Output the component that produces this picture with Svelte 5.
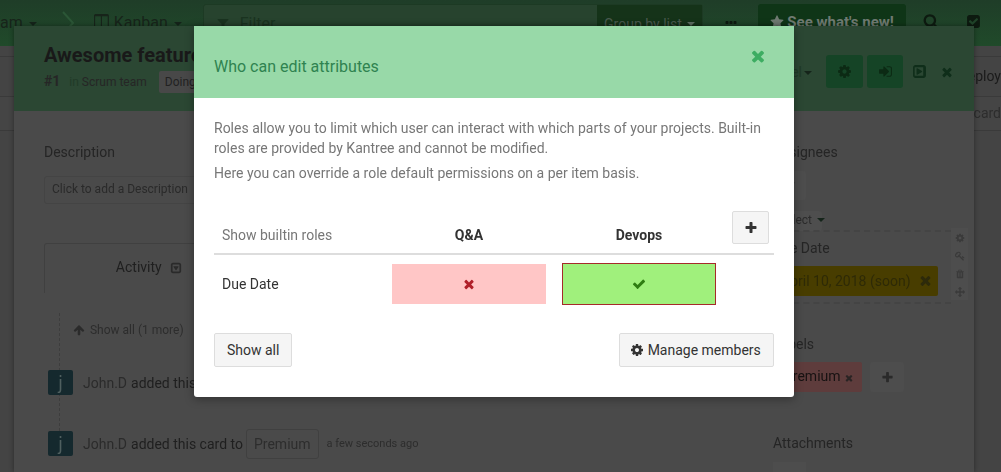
<script>
  const fa = {
    times: 'M1490 1322q0 40-28 68l-136 136q-28 28-68 28t-68-28l-294-294-294 294q-28 28-68 28t-68-28l-136-136q-28-28-28-68t28-68l294-294-294-294q-28-28-28-68t28-68l136-136q28-28 68-28t68 28l294 294 294-294q28-28 68-28t68 28l136 136q28 28 28 68t-28 68l-294 294 294 294q28 28 28 68z',
    check: 'M1671 566q0 40-28 68l-724 724-136 136q-28 28-68 28t-68-28l-136-136-362-362q-28-28-28-68t28-68l136-136q28-28 68-28t68 28l294 295 656-657q28-28 68-28t68 28l136 136q28 28 28 68z',
    plus: 'M1600 736v192q0 40-28 68t-68 28h-416v416q0 40-28 68t-68 28h-192q-40 0-68-28t-28-68v-416h-416q-40 0-68-28t-28-68v-192q0-40 28-68t68-28h416v-416q0-40 28-68t68-28h192q40 0 68 28t28 68v416h416q40 0 68 28t28 68z',
    cog: 'M1152 896q0-106-75-181t-181-75-181 75-75 181 75 181 181 75 181-75 75-181zm512-109v222q0 12-8 23t-20 13l-185 28q-19 54-39 91 35 50 107 138 10 12 10 25t-9 23q-27 37-99 108t-94 71q-12 0-26-9l-138-108q-44 23-91 38-16 136-29 186-7 28-36 28h-222q-14 0-24.5-8.5t-11.5-21.5l-28-184q-49-16-90-37l-141 107q-10 9-25 9-14 0-25-11-126-114-165-168-7-10-7-23 0-12 8-23 15-21 51-66.5t54-70.5q-27-50-41-99l-183-27q-13-2-21-12.5t-8-23.5v-222q0-12 8-23t19-13l186-28q14-46 39-92-40-57-107-138-10-12-10-24 0-10 9-23 26-36 98.5-107.5t94.5-71.5q13 0 26 10l138 107q44-23 91-38 16-136 29-186 7-28 36-28h222q14 0 24.5 8.5t11.5 21.5l28 184q49 16 90 37l142-107q9-9 24-9 13 0 25 10 129 119 165 170 7 8 7 22 0 12-8 23-15 21-51 66.5t-54 70.5q26 50 41 98l183 28q13 2 21 12.5t8 23.5z',
    star: 'M1728 647q0 22-26 48l-363 354 86 500q1 7 1 20 0 21-10.5 35.5t-30.5 14.5q-19 0-40-12l-449-236-449 236q-22 12-40 12-21 0-31.5-14.5t-10.5-35.5q0-6 2-20l86-500-364-354q-25-27-25-48 0-37 56-46l502-73 225-455q19-41 49-41t49 41l225 455 502 73q56 9 56 46z',
    up: 'M1675 971q0 51-37 90l-75 75q-38 38-91 38-54 0-90-38l-294-293v704q0 52-37.5 84.5t-90.5 32.5h-128q-53 0-90.5-32.5t-37.5-84.5v-704l-294 293q-36 38-90 38t-90-38l-75-75q-38-38-38-90 0-53 38-91l651-651q35-37 90-37 54 0 91 37l651 651q37 39 37 91z',
    signin: 'M1312 896q0 26-19 45l-544 544q-19 19-45 19t-45-19-19-45v-288h-448q-26 0-45-19t-19-45v-384q0-26 19-45t45-19h448v-288q0-26 19-45t45-19 45 19l544 544q19 19 19 45zm352-352v704q0 119-84.5 203.5t-203.5 84.5h-320q-13 0-22.5-9.5t-9.5-22.5q0-4-1-20t-.5-26.5 3-23.5 10-19.5 20.5-6.5h320q66 0 113-47t47-113v-704q0-66-47-113t-113-47h-312q-13 0-22.5-9.5t-9.5-22.5q0-4-1-20t-.5-26.5 3-23.5 10-19.5 20.5-6.5h320q119 0 203.5 84.5t84.5 203.5z',
    filter: 'M1595 295q17 41-14 70l-493 493v742q0 42-39 59-13 5-25 5-27 0-45-19l-256-256q-19-19-19-45v-486l-493-493q-31-29-14-70 17-39 59-39h1280q42 0 59 39z',
    search: 'M1216 832q0-185-131.5-316.5t-316.5-131.5-316.5 131.5-131.5 316.5 131.5 316.5 316.5 131.5 316.5-131.5 131.5-316.5zm512 832q0 52-38 90t-90 38q-54 0-90-38l-343-342q-179 124-399 124-143 0-273.5-55.5t-225-150-150-225-55.5-273.5 55.5-273.5 150-225 225-150 273.5-55.5 273.5 55.5 225 150 150 225 55.5 273.5q0 220-124 399l343 343q37 37 37 90z',
    checkSquare: 'M813 1299l614-614q19-19 19-45t-19-45l-102-102q-19-19-45-19t-45 19l-467 467-211-211q-19-19-45-19t-45 19l-102 102q-19 19-19 45t19 45l358 358q19 19 45 19t45-19zm851-883v960q0 119-84.5 203.5t-203.5 84.5h-960q-119 0-203.5-84.5t-84.5-203.5v-960q0-119 84.5-203.5t203.5-84.5h960q119 0 203.5 84.5t84.5 203.5z',
    playSquare: 'M1216 896q0 37-32 55l-544 320q-15 9-32 9-16 0-32-8-32-19-32-56v-640q0-37 32-56 33-18 64 1l544 320q32 18 32 55zm128 480v-960q0-13-9.5-22.5t-22.5-9.5h-960q-13 0-22.5 9.5t-9.5 22.5v960q0 13 9.5 22.5t22.5 9.5h960q13 0 22.5-9.5t9.5-22.5zm320-960v960q0 119-84.5 203.5t-203.5 84.5h-960q-119 0-203.5-84.5t-84.5-203.5v-960q0-119 84.5-203.5t203.5-84.5h960q119 0 203.5 84.5t84.5 203.5z',
    key: 'M832 512q0-80-56-136t-136-56-136 56-56 136q0 42 19 83-41-19-83-19-80 0-136 56t-56 136 56 136 136 56 136-56 56-136q0-42-19-83 41 19 83 19 80 0 136-56t56-136zm851 704q0 17-49 66t-66 49q-9 0-28.5-16t-36.5-33-38.5-40-24.5-26l-96 96 220 220q28 28 28 68 0 42-39 81t-81 39q-40 0-68-28l-671-671q-176 131-365 131-163 0-265.5-102.5t-102.5-265.5q0-160 95-313t248-248 313-95q163 0 265.5 102.5t102.5 265.5q0 189-131 365l355 355 96-96q-3-3-26-24.5t-40-38.5-33-36.5-16-28.5q0-17 49-66t66-49q13 0 23 10 6 6 46 44.5t82 79.5 86.5 86 73 78 28.5 41z',
    trash: 'M704 1376v-704q0-14-9-23t-23-9h-64q-14 0-23 9t-9 23v704q0 14 9 23t23 9h64q14 0 23-9t9-23zm256 0v-704q0-14-9-23t-23-9h-64q-14 0-23 9t-9 23v704q0 14 9 23t23 9h64q14 0 23-9t9-23zm256 0v-704q0-14-9-23t-23-9h-64q-14 0-23 9t-9 23v704q0 14 9 23t23 9h64q14 0 23-9t9-23zm-544-992h448l-48-117q-7-9-17-11h-317q-10 2-17 11zm928 32v64q0 14-9 23t-23 9h-96v948q0 83-47 143.5t-113 60.5h-832q-66 0-113-58.5t-47-141.5v-952h-96q-14 0-23-9t-9-23v-64q0-14 9-23t23-9h309l70-167q15-37 54-63t79-26h320q40 0 79 26t54 63l70 167h309q14 0 23 9t9 23z',
    move: 'M1792 896q0 26-19 45l-256 256q-19 19-45 19t-45-19-19-45v-128h-384v384h128q26 0 45 19t19 45-19 45l-256 256q-19 19-45 19t-45-19l-256-256q-19-19-19-45t19-45 45-19h128v-384h-384v128q0 26-19 45t-45 19-45-19l-256-256q-19-19-19-45t19-45l256-256q19-19 45-19t45 19 19 45v128h384v-384h-128q-26 0-45-19t-19-45 19-45l256-256q19-19 45-19t45 19l256 256q19 19 19 45t-19 45-45 19h-128v384h384v-128q0-26 19-45t45-19 45 19l256 256q19 19 19 45z',
    caretSquare: 'M1273 675q18 35-5 66l-320 448q-19 27-52 27t-52-27l-320-448q-23-31-5-66 17-35 57-35h640q40 0 57 35zm135 701v-960q0-13-9.5-22.5t-22.5-9.5h-960q-13 0-22.5 9.5t-9.5 22.5v960q0 13 9.5 22.5t22.5 9.5h960q13 0 22.5-9.5t9.5-22.5zm256-960v960q0 119-84.5 203.5t-203.5 84.5h-960q-119 0-203.5-84.5t-84.5-203.5v-960q0-119 84.5-203.5t203.5-84.5h960q119 0 203.5 84.5t84.5 203.5z',
    columns: 'M160 1408h608v-1152h-640v1120q0 13 9.5 22.5t22.5 9.5zm736 0h608q13 0 22.5-9.5t9.5-22.5v-1120h-640v1152zm768-1248v1216q0 66-47 113t-113 47h-1344q-66 0-113-47t-47-113v-1216q0-66 47-113t113-47h1344q66 0 113 47t47 113z',
    ellipsis: 'M576 736v192q0 40-28 68t-68 28h-192q-40 0-68-28t-28-68v-192q0-40 28-68t68-28h192q40 0 68 28t28 68zm512 0v192q0 40-28 68t-68 28h-192q-40 0-68-28t-28-68v-192q0-40 28-68t68-28h192q40 0 68 28t28 68zm512 0v192q0 40-28 68t-68 28h-192q-40 0-68-28t-28-68v-192q0-40 28-68t68-28h192q40 0 68 28t28 68z'
  };
</script>

{#snippet icon(name, size, color)}
  <svg class="icon" width={size} height={size} viewBox="0 0 1792 1792" fill={color} aria-hidden="true"><path d={fa[name]} /></svg>
{/snippet}

<div class="page">
  <div class="behind">
    <header class="topbar">
      <span class="crumb team">am <i class="caret"></i></span>
      <svg class="sep" width="14" height="26" viewBox="0 0 14 26" aria-hidden="true"><path d="M2 2l10 11L2 24" fill="none" stroke="#2b5636" stroke-width="2" /></svg>
      <span class="crumb kanban">{@render icon('columns', 16, '#17241a')} Kanban <i class="caret"></i></span>
      <div class="filter">
        <span class="filter-input">{@render icon('filter', 14, '#1a3320')} <span>Filter</span></span>
        <span class="group-by">Group by list <i class="caret light"></i></span>
      </div>
      <span class="dots">{@render icon('ellipsis', 14, '#0f1a12')}</span>
      <span class="news">{@render icon('star', 14, '#6f7a72')} See what's new!</span>
      <span class="search">{@render icon('search', 16, '#0d1a10')}</span>
      <span class="todo">{@render icon('checkSquare', 15, '#0d1a10')}</span>
    </header>
    <div class="board">
      <div class="board-row deploy">Deploy</div>
      <div class="board-row add">Add a card</div>
    </div>

    <section class="card">
      <div class="card-head">
        <div class="card-title">
          <h1>Awesome feature</h1>
          <div class="card-meta"><b>#1</b> <span class="in">in</span> Scrum team <span class="status">Doing</span></div>
        </div>
        <div class="card-actions">
          <span class="model">Model<i class="caret"></i></span>
          <span class="act-btn cog">{@render icon('cog', 15, '#0c2a14')}</span>
          <span class="act-btn signin">{@render icon('signin', 15, '#0c2a14')}</span>
          <span class="act-ico play">{@render icon('playSquare', 15, '#0f2e1a')}</span>
          <span class="act-ico close-card">{@render icon('times', 14, '#0f2e1a')}</span>
        </div>
      </div>
      <div class="card-body">
        <div class="col-main">
          <h2>Description</h2>
          <div class="desc">Click to add a Description</div>
          <div class="tab">Activity <span class="tab-ico">{@render icon('caretSquare', 12, '#2a2a2a')}</span></div>
          <div class="feed">
            <div class="show-more">{@render icon('up', 12, '#2b2b2b')} <span>Show all (1 more)</span></div>
            <div class="event"><span class="avatar">j</span><span class="who">John.D</span> <span class="what">added this card to</span></div>
            <div class="event second"><span class="avatar">j</span><span class="who">John.D</span> <span class="what">added this card to</span> <span class="pill">Premium</span> <span class="when">a few seconds ago</span></div>
          </div>
        </div>
        <div class="col-side">
          <h2>Assignees</h2>
          <div class="assign-btn">+</div>
          <div class="select">Select <i class="caret"></i></div>
          <div class="due">
            <h2>Due Date</h2>
            <div class="due-row"><span class="due-tag">April 10, 2018 (soon) <span class="due-x">{@render icon('times', 15, '#2d2a0a')}</span></span></div>
            <div class="tools">
              {@render icon('cog', 10, '#3a3a3a')}
              {@render icon('key', 10, '#3a3a3a')}
              {@render icon('trash', 10, '#3a3a3a')}
              {@render icon('move', 10, '#3a3a3a')}
            </div>
          </div>
          <h2 class="labels-title">Labels</h2>
          <div class="labels">
            <span class="label">Premium<span class="label-x">{@render icon('times', 10, '#2a2424')}</span></span>
            <span class="label-add">{@render icon('plus', 13, '#2a2a2a')}</span>
          </div>
          <h2 class="attach-title">Attachments</h2>
          <div class="attach-btn"></div>
        </div>
      </div>
    </section>
  </div>

  <div class="dialog" role="dialog" aria-label="Who can edit attributes">
    <div class="dialog-head">
      <h3>Who can edit attributes</h3>
      <span class="close">{@render icon('times', 18, '#3dad62')}</span>
    </div>
    <div class="dialog-body">
      <p>Roles allow you to limit which user can interact with which parts of your projects. Built-in roles are provided by Kantree and cannot be modified.</p>
      <p class="second-p">Here you can override a role default permissions on a per item basis.</p>
      <table>
        <thead>
          <tr>
            <th class="roles-toggle">Show builtin roles</th>
            <th>Q&amp;A</th>
            <th>Devops</th>
            <th class="add-col"><button class="btn add">{@render icon('plus', 14, '#333')}</button></th>
          </tr>
        </thead>
        <tbody>
          <tr>
            <td class="attr">Due Date</td>
            <td><div class="perm deny">{@render icon('times', 14, '#b0202a')}</div></td>
            <td><div class="perm allow">{@render icon('check', 14, '#2f7d12')}</div></td>
            <td></td>
          </tr>
        </tbody>
      </table>
      <div class="dialog-foot">
        <button class="btn">Show all</button>
        <button class="btn manage">{@render icon('cog', 14, '#333')} Manage members</button>
      </div>
    </div>
  </div>
</div>

<style>
  :global(body) {
    margin: 0;
    font-family: Roboto, "Liberation Sans", sans-serif;
    overflow: hidden;
  }

  .page {
    position: relative;
    width: 1001px;
    height: 472px;
    overflow: hidden;
    background: #444;
    font-size: 14px;
    color: #333;
  }

  .icon {
    display: inline-block;
    vertical-align: -2px;
  }

  .caret {
    display: inline-block;
    width: 0;
    height: 0;
    margin-left: 2px;
    vertical-align: 2px;
    border-top: 4px solid #15241a;
    border-left: 4px solid transparent;
    border-right: 4px solid transparent;
  }

  .caret.light {
    border-top-color: #5f6f64;
  }

  .behind {
    position: absolute;
    inset: 0;
    filter: blur(0.45px);
  }

  .topbar {
    display: flex;
    align-items: center;
    height: 46px;
    padding-bottom: 1px;
    box-sizing: border-box;
    background: linear-gradient(#1f3d28, #204a2a);
    color: #17241a;
    font-size: 16px;
    white-space: nowrap;
  }

  .sep {
    margin-left: 24px;
  }

  .kanban {
    margin-left: 19px;
  }

  .filter {
    display: flex;
    height: 40px;
    margin-left: 21px;
    margin-top: 3px;
    border-radius: 3px;
    background: #27432e;
    border: 1px solid #1d3a24;
    box-sizing: border-box;
    width: 500px;
  }

  .filter-input {
    flex: 1;
    padding: 9px 12px;
    color: #1a3320;
  }

  .filter-input span {
    margin-left: 6px;
  }

  .group-by {
    display: flex;
    align-items: center;
    gap: 3px;
    height: 38px;
    padding: 0 7px 2px;
    background: #153319;
    color: #4a5a4f;
    font-size: 14px;
  }

  .dots {
    margin-left: 21px;
  }

  .news {
    margin-left: 20px;
    width: 148px;
    height: 38px;
    margin-top: 1px;
    padding-top: 9px;
    box-sizing: border-box;
    border-radius: 3px;
    background: #0f3517;
    color: #6f7a72;
    font-size: 15px;
    font-weight: 700;
    text-align: center;
  }

  .search {
    margin: 0 0 2px 17px;
  }

  .todo {
    margin: 0 0 2px 27px;
  }

  .board {
    padding-top: 10px;
  }

  .board-row {
    box-sizing: border-box;
    border-top: 1px solid #3a3a3a;
    text-align: right;
    white-space: nowrap;
  }

  .deploy {
    height: 40px;
    padding-top: 11px;
    color: #1b1b1b;
  }

  .add {
    height: 35px;
    padding-top: 8px;
    border-bottom: 1px solid #3a3a3a;
    color: #2d2d2d;
    background: #454545;
  }

  .card {
    position: absolute;
    left: 14px;
    top: 26px;
    width: 960px;
    height: 446px;
    overflow: hidden;
    background: #4a4a4a;
    box-shadow: 0 0 5px rgba(0, 0, 0, 0.4);
  }

  .card-head {
    display: flex;
    justify-content: space-between;
    box-sizing: border-box;
    height: 85px;
    padding: 16px 15px 0 30px;
    background: #2b4733;
  }

  h1 {
    margin: 0;
    font-size: 20px;
    line-height: 26px;
    font-weight: 700;
    color: #191919;
  }

  .card-meta {
    margin-top: 5px;
    font-size: 12px;
    color: #262626;
    white-space: nowrap;
  }

  .card-meta b {
    font-size: 14px;
    margin-right: 6px;
  }

  .in {
    color: #213a28;
  }

  .status {
    margin-left: 9px;
    padding: 4px 6px;
    border-radius: 2px;
    background: #484848;
    color: #222;
  }

  .card-actions {
    display: flex;
    align-items: center;
    height: 33px;
    margin-top: 13px;
  }

  .model {
    margin-right: 14px;
    color: #1f3a27;
    font-size: 14px;
  }

  .act-btn {
    display: flex;
    align-items: center;
    justify-content: center;
    height: 33px;
    border-radius: 3px;
    background: #154426;
  }

  .cog {
    width: 37px;
    margin-right: 4px;
  }

  .signin {
    width: 36px;
    margin-right: 1px;
  }

  .act-ico {
    display: flex;
    justify-content: center;
    width: 15px;
    margin-left: 8px;
    margin-right: 5px;
  }

  .close-card {
    margin-left: 7px;
  }

  .card-body {
    display: grid;
    grid-template-columns: 729px 1fr;
    padding: 31px 0 0 30px;
  }

  h2 {
    margin: 0;
    font-size: 14px;
    line-height: 20px;
    font-weight: 400;
    color: #252525;
  }

  .desc {
    box-sizing: border-box;
    width: 250px;
    height: 28px;
    margin-top: 14px;
    padding: 5px 7px;
    border: 1px solid #444;
    border-radius: 3px;
    font-size: 12px;
    color: #2a2a2a;
  }

  .tab {
    box-sizing: border-box;
    width: 210px;
    height: 50px;
    margin-top: 39px;
    padding-top: 15px;
    border: 1px solid #404040;
    border-bottom: 0;
    border-radius: 3px 3px 0 0;
    text-align: center;
    color: #1f1f1f;
  }

  .tab-ico {
    margin-left: 5px;
  }

  .feed {
    margin: 20px 0 0 15px;
    border-left: 1px dashed #3d3d3d;
    padding-top: 8px;
  }

  .show-more {
    padding-left: 13px;
    font-size: 12px;
    line-height: 18px;
    color: #2d2d2d;
  }

  .show-more span {
    margin-left: 2px;
  }

  .event {
    display: flex;
    align-items: center;
    gap: 4px;
    height: 25px;
    margin: 31px 0 0 -12px;
    font-size: 14px;
    color: #1f1f1f;
    white-space: nowrap;
  }

  .event.second {
    margin-top: 36px;
  }

  .avatar {
    width: 25px;
    height: 25px;
    margin-right: 6px;
    border-radius: 2px;
    background: #15292e;
    color: #4f5f5f;
    font: 18px/25px "DejaVu Sans", sans-serif;
    text-align: center;
  }

  .who {
    color: #2b2b2b;
  }

  .pill {
    box-sizing: border-box;
    height: 30px;
    margin-left: -1px;
    padding: 6px 7px;
    border: 1px solid #404040;
    border-radius: 3px;
    color: #2d2d2d;
  }

  .when {
    margin-left: 4px;
    font-size: 11px;
    color: #2d2d2d;
  }

  .assign-btn {
    box-sizing: border-box;
    width: 33px;
    height: 29px;
    margin-top: 9px;
    padding: 4px 0 0 14px;
    border-radius: 3px;
    background: #4d4d4d;
    color: #333;
  }

  .select {
    box-sizing: border-box;
    width: 49px;
    height: 20px;
    margin-top: 11px;
    padding: 2px 6px;
    border-radius: 3px;
    background: #4e4e4e;
    font-size: 12px;
    color: #2b2b2b;
    white-space: nowrap;
  }

  .due {
    position: relative;
    box-sizing: border-box;
    width: 178px;
    height: 74px;
    margin-top: -1px;
    padding-top: 6px;
    border-top: 2px dashed #444;
    border-bottom: 2px dashed #444;
  }

  .due-row {
    margin-top: 8px;
  }

  .due-tag {
    display: flex;
    align-items: center;
    justify-content: space-between;
    box-sizing: border-box;
    width: 165px;
    height: 30px;
    padding: 0 5px 0 8px;
    border-radius: 2px;
    background: #483d00;
    color: #2e2a06;
    white-space: nowrap;
  }

  .tools {
    position: absolute;
    left: 178px;
    top: -4px;
    display: flex;
    flex-direction: column;
    align-items: center;
    gap: 8px;
    width: 17px;
    height: 72px;
    padding-top: 5px;
    box-sizing: border-box;
    background: #4d4d4d;
  }

  .labels-title {
    margin-top: 30px;
  }

  .labels {
    display: flex;
    align-items: center;
    gap: 8px;
    margin-top: 8px;
  }

  .label {
    box-sizing: border-box;
    width: 89px;
    height: 30px;
    padding: 6px 0 0 11px;
    border-radius: 2px;
    background: #5e3c3c;
    color: #171212;
    white-space: nowrap;
  }

  .label-x {
    margin-left: 3px;
  }

  .label-add {
    display: flex;
    align-items: center;
    justify-content: center;
    width: 34px;
    height: 30px;
    border-radius: 3px;
    background: #4d4d4d;
  }

  .attach-title {
    margin-top: 41px;
  }

  .attach-btn {
    width: 33px;
    height: 30px;
    margin-top: 9px;
    background: #4d4d4d;
  }

  .dialog {
    position: absolute;
    left: 194px;
    top: 26px;
    width: 600px;
    height: 371px;
    border-radius: 0 0 3px 3px;
    background: #fff;
    box-shadow: 0 2px 10px rgba(0, 0, 0, 0.35);
  }

  .dialog-head {
    position: relative;
    box-sizing: border-box;
    height: 72px;
    padding: 31px 20px 0;
    background: #98d9a8;
  }

  h3 {
    margin: 0;
    font-size: 16px;
    line-height: 20px;
    font-weight: 400;
    color: #2f8350;
  }

  .close {
    position: absolute;
    right: 27px;
    top: 21px;
    line-height: 18px;
  }

  .dialog-body {
    padding: 20px;
    color: #777;
    line-height: 20px;
  }

  p {
    margin: 0;
  }

  .second-p {
    margin-top: 5px;
  }

  table {
    width: 560px;
    margin-top: 26px;
    border-collapse: collapse;
    table-layout: fixed;
  }

  th {
    height: 45px;
    padding: 0 8px 8px;
    box-sizing: border-box;
    border-bottom: 2px solid #ddd;
    vertical-align: bottom;
    text-align: center;
    font-weight: 700;
    color: #333;
  }

  th:nth-child(1),
  th:nth-child(2),
  th:nth-child(3) {
    width: 170px;
  }

  th.roles-toggle {
    text-align: left;
    font-weight: 400;
    color: #777;
  }

  th.add-col {
    padding: 0 5px 9px 8px;
  }

  td {
    padding: 9px 8px 8px;
  }

  td.attr {
    color: #333;
  }

  .perm {
    display: flex;
    align-items: center;
    justify-content: center;
    box-sizing: border-box;
    height: 40px;
  }

  .deny {
    background: #ffc6c6;
  }

  .allow {
    height: 42px;
    margin: -1px 0;
    border: 1px solid #a52a2a;
    background: #a0f07c;
  }

  .dialog-foot {
    display: flex;
    justify-content: space-between;
    margin-top: 21px;
  }

  .btn {
    box-sizing: border-box;
    height: 34px;
    padding: 0 12px;
    border: 1px solid #ddd;
    border-radius: 2px;
    background: #f5f5f5;
    color: #333;
    font: 14px Roboto, "Liberation Sans", sans-serif;
  }

  .btn.manage {
    width: 155px;
    padding: 0 2px 0 0;
  }

  .btn.add {
    width: 37px;
    height: 33px;
    padding: 0;
  }
</style>
